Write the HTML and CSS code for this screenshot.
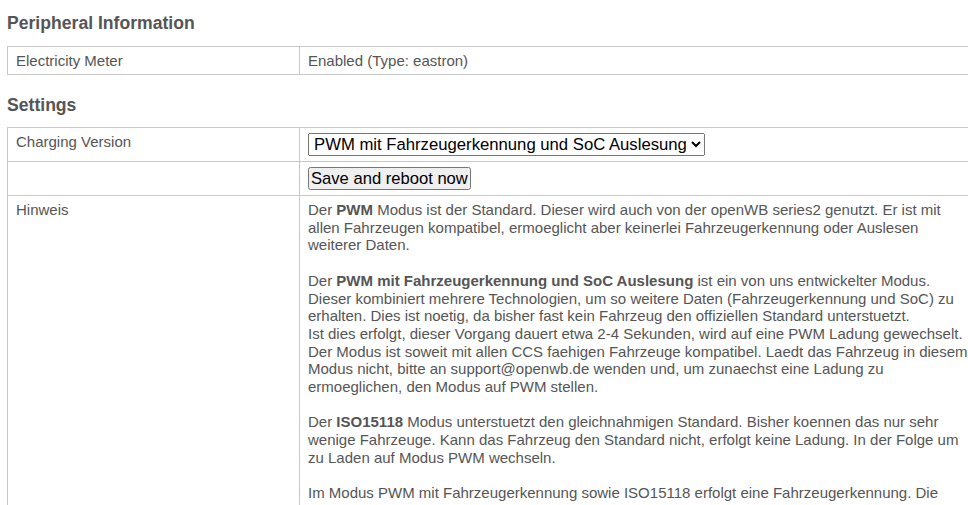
FILE: index.html
```html
<!DOCTYPE html>
<html>
<head>
<meta charset="utf-8">
<link rel="stylesheet" href="styles.css">
</head>
<body>
<div class="page">
  <h3 class="section-title">Peripheral Information</h3>
  <table class="info-table">
    <tr>
      <td class="label">Electricity Meter</td>
      <td class="value">Enabled (Type: eastron)</td>
    </tr>
  </table>
  <h3 class="section-title second">Settings</h3>
  <table class="info-table">
    <tr>
      <td class="label">Charging Version</td>
      <td class="value">
        <select class="field-select">
          <option>PWM</option>
          <option selected>PWM mit Fahrzeugerkennung und SoC Auslesung</option>
          <option>ISO15118</option>
        </select>
      </td>
    </tr>
    <tr>
      <td class="label"></td>
      <td class="value"><button class="field-button">Save and reboot now</button></td>
    </tr>
    <tr>
      <td class="label">Hinweis</td>
      <td class="value text">Der <b>PWM</b> Modus ist der Standard. Dieser wird auch von der openWB series2 genutzt. Er ist mit allen Fahrzeugen kompatibel, ermoeglicht aber keinerlei Fahrzeugerkennung oder Auslesen weiterer Daten.<br><br>Der <b>PWM mit Fahrzeugerkennung und SoC Auslesung</b> ist ein von uns entwickelter Modus. Dieser kombiniert mehrere Technologien, um so weitere Daten (Fahrzeugerkennung und SoC) zu erhalten. Dies ist noetig, da bisher fast kein Fahrzeug den offiziellen Standard unterstuetzt.<br>Ist dies erfolgt, dieser Vorgang dauert etwa 2-4 Sekunden, wird auf eine PWM Ladung gewechselt. Der Modus ist soweit mit allen CCS faehigen Fahrzeuge kompatibel. Laedt das Fahrzeug in diesem Modus nicht, bitte an support@openwb.de wenden und, um zunaechst eine Ladung zu ermoeglichen, den Modus auf PWM stellen.<br><br>Der <b>ISO15118</b> Modus unterstuetzt den gleichnahmigen Standard. Bisher koennen das nur sehr wenige Fahrzeuge. Kann das Fahrzeug den Standard nicht, erfolgt keine Ladung. In der Folge um zu Laden auf Modus PWM wechseln.<br><br>Im Modus PWM mit Fahrzeugerkennung sowie ISO15118 erfolgt eine Fahrzeugerkennung. Die erkannte Fahrzeug-ID kann fuer die Zuordnung eines Fahrzeugs genutzt werden.</td>
    </tr>
  </table>
</div>
</body>
</html>
```
FILE: styles.css
```css
html, body {
  margin: 0;
  padding: 0;
  background: #fff;
}
body {
  font-family: "Liberation Sans", Arial, sans-serif;
  font-size: 15px;
  color: #555;
  overflow: hidden;
}
.page {
  padding: 0 0 0 7px;
  width: 990px;
}
.section-title {
  font-size: 17.6px;
  font-weight: bold;
  margin: 13px 0 12px 0;
  line-height: 21px;
  color: #555;
}
.section-title.second {
  margin-bottom: 11px;
}
.info-table {
  border-collapse: collapse;
  width: 972px;
  margin-bottom: 20px;
}
.info-table td {
  border: 1px solid #c8c8c8;
  padding: 5px 8px 5px 8px;
  vertical-align: top;
  line-height: 17px;
}
.info-table td.label {
  width: 275px;
}
.info-table td.text {
  line-height: 17.7px;
}
.field-select {
  font-family: "Liberation Sans", Arial, sans-serif;
  font-size: 16.7px;
  color: #000;
  height: 23px;
  margin: 0;
  padding: 0 0 0 1px;
}
.field-button {
  font-family: "Liberation Sans", Arial, sans-serif;
  font-size: 16.6px;
  color: #000;
  height: 23px;
  margin: 0;
  padding: 0 1px;
}
```
